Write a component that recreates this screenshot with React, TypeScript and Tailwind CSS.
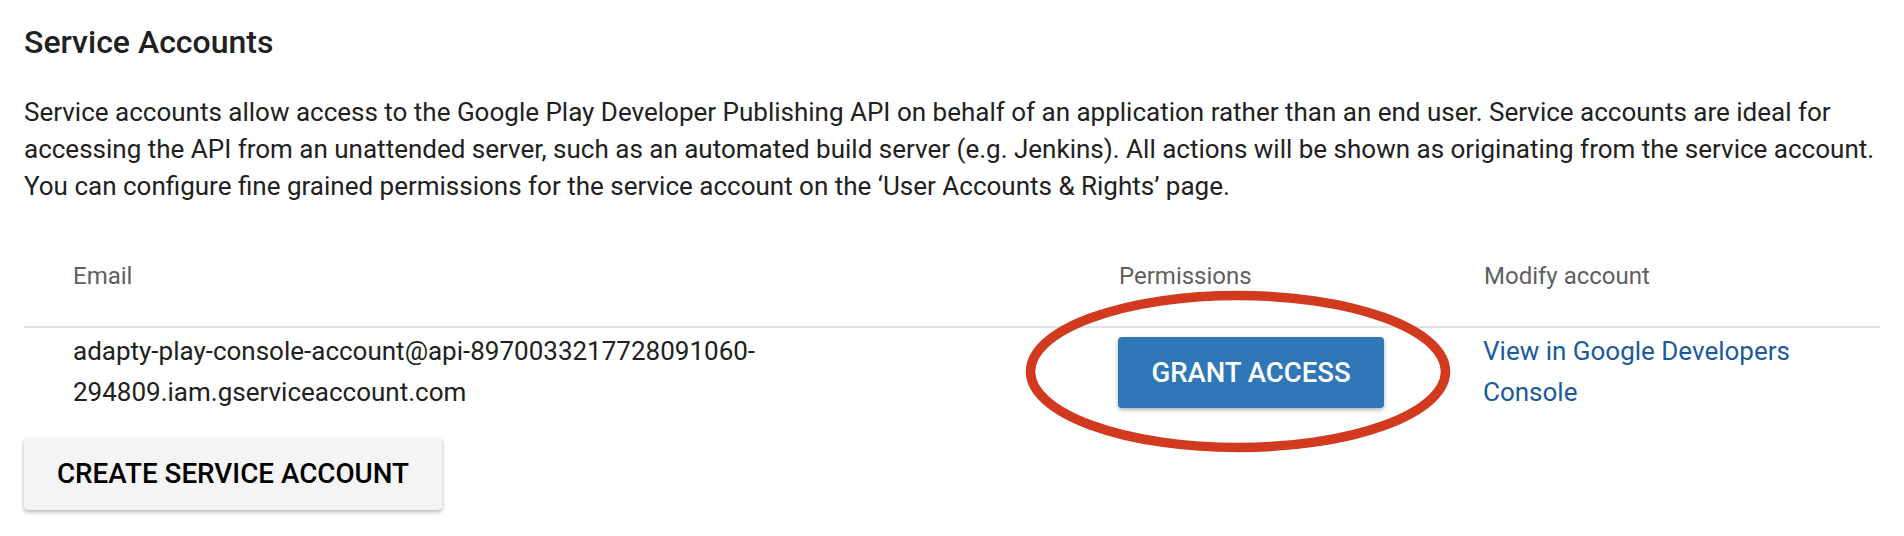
import React from 'react';

const App: React.FC = () => {
  return (
    <div className="relative min-h-[536px] bg-white px-6 font-['Roboto',sans-serif] text-[#212121]">
      <h2 className="pt-[22px] text-[32px] font-medium leading-10">Service Accounts</h2>

      <p className="mt-[32px] text-[26px] leading-[37px]">
        Service accounts allow access to the Google Play Developer Publishing API on behalf of an application rather
        than an end user. Service accounts are ideal for accessing the API from an unattended server, such as an
        automated build server (e.g. Jenkins). All actions will be shown as originating from the service account. You
        can configure fine grained permissions for the service account on the ‘User Accounts &amp; Rights’ page.
      </p>

      {/* header row */}
      <div className="grid grid-cols-[1046px_365px_1fr] text-2xl leading-[37px] text-[#5f5f5f]">
        <div className="pb-[31px] pl-[49px] pt-[53px]">Email</div>
        <div className="pb-[31px] pl-[49px] pt-[53px]">Permissions</div>
        <div className="pb-[31px] pl-[49px] pt-[53px]">Modify account</div>
      </div>
      <div className="h-[2px] bg-[#e2e2e2]" />

      {/* account row */}
      <div className="grid grid-cols-[1046px_365px_1fr] items-start text-[26px] leading-[41px]">
        <div className="pl-[49px] pt-[3px]">
          adapty-play-console-account@api-897003321772809106​0-<wbr />294809.iam.gserviceaccount.com
        </div>
        <div className="pl-[48px] pt-[9px]">
          <button className="flex h-[71px] w-[266px] items-center justify-center rounded-[4px] bg-[#3077b7] text-[27.5px] font-medium uppercase text-white shadow-[0_2px_4px_rgba(0,0,0,0.3)]">
            Grant access
          </button>
        </div>
        <div className="pl-[48px] pt-[3px]">
          <a href="#" className="block w-[360px] text-[#1b5a9c]">
            View in Google Developers Console
          </a>
        </div>
      </div>

      <button className="mt-[25px] flex h-[72px] w-[418px] items-center justify-center rounded-[4px] bg-[#f4f4f4] text-[27.8px] font-medium uppercase text-black shadow-[0_2px_4px_rgba(0,0,0,0.3)]">
        Create service account
      </button>

      {/* hand-drawn highlight around the grant button */}
      <svg
        className="pointer-events-none absolute left-[1020px] top-[285px]"
        width="440"
        height="175"
        viewBox="0 0 440 175"
        fill="none"
      >
        <ellipse cx="218" cy="86.5" rx="207.5" ry="76" stroke="#d13a1f" strokeWidth="9.5" />
      </svg>
    </div>
  );
};

export default App;
